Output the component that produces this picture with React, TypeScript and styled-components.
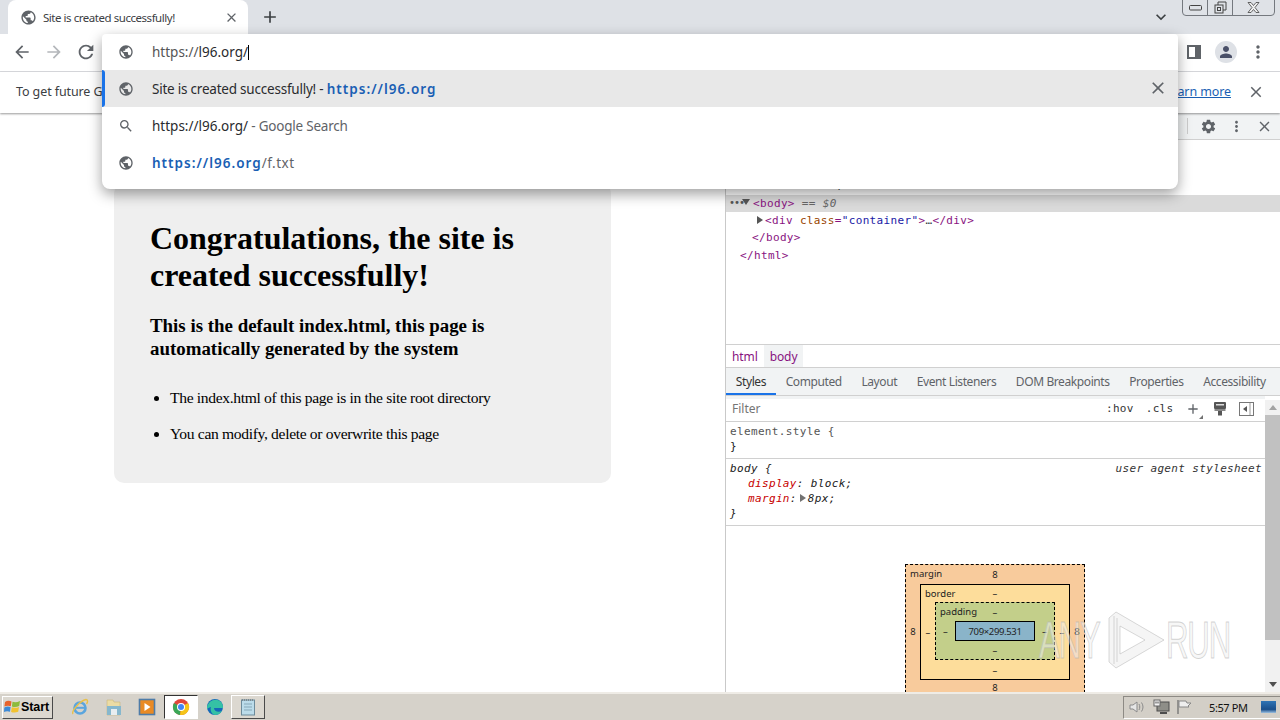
import React from 'react';
import styled, { createGlobalStyle } from 'styled-components';
import {
  MdAdd,
  MdArrowBack,
  MdArrowForward,
  MdClose,
  MdExpandMore,
  MdMoreVert,
  MdPerson,
  MdPublic,
  MdRefresh,
  MdSearch,
  MdSettings,
} from 'react-icons/md';

const UI_FONT = `'Noto Sans', 'Open Sans', sans-serif`;
const MONO_FONT = `'DejaVu Sans Mono', 'Liberation Mono', monospace`;

const GlobalStyle = createGlobalStyle`
  html, body {
    margin: 0;
    padding: 0;
    width: 1280px;
    height: 720px;
    overflow: hidden;
    background: #fff;
  }
  * { box-sizing: border-box; }
`;

const Screen = styled.div`
  position: relative;
  width: 1280px;
  height: 720px;
  display: flex;
  flex-direction: column;
  overflow: hidden;
  font-family: ${UI_FONT};
`;

/* ---------- tab strip ---------- */

const TabStrip = styled.div`
  height: 34px;
  flex: none;
  background: #dee1e6;
  display: flex;
  align-items: flex-end;
  padding: 0 5px 0 8px;
`;

const Tab = styled.div`
  width: 240px;
  height: 34px;
  background: #fff;
  border-radius: 8px 8px 0 0;
  display: flex;
  align-items: center;
  padding: 0 9px 0 12px;
  color: #5f6368;
`;

const TabTitle = styled.span`
  flex: 1;
  margin-left: 6px;
  font-size: 11.5px;
  letter-spacing: -0.46px;
  color: #3c4043;
  white-space: nowrap;
`;

const NewTab = styled.div`
  width: 28px;
  height: 28px;
  margin: 0 auto 3px 8px;
  display: flex;
  align-items: center;
  justify-content: center;
  color: #3c4043;
`;

const StripRight = styled.div`
  align-self: stretch;
  display: flex;
  align-items: flex-start;
  gap: 11px;
`;

const TabListButton = styled.div`
  margin-top: 7px;
  color: #3c4043;
  display: flex;
`;

const WindowControls = styled.div`
  display: flex;
  height: 17px;
  margin-top: -1px;
  border: 1px solid #74787e;
  border-radius: 0 0 4px 4px;
  background: #dfe2e7;
`;

const WindowButton = styled.div<{ $w: number }>`
  width: ${(p) => p.$w}px;
  display: flex;
  align-items: center;
  justify-content: center;
  & + & { border-left: 1px solid #74787e; }
`;

/* ---------- toolbar ---------- */

const Toolbar = styled.div`
  height: 38px;
  flex: none;
  background: #fff;
  border-bottom: 1px solid #dadce0;
  display: flex;
  align-items: center;
  justify-content: space-between;
  padding: 0 11px 1px 11px;
`;

const NavGroup = styled.div`
  display: flex;
  gap: 10px;
  align-items: center;
`;

const ToolButton = styled.div<{ $off?: boolean }>`
  width: 22px;
  height: 22px;
  display: flex;
  align-items: center;
  justify-content: center;
  color: ${(p) => (p.$off ? '#b4b7bb' : '#5f6368')};
`;

const SideIcon = styled.div`
  width: 14px;
  height: 14px;
  margin-right: 1px;
  border: 2px solid #5f6368;
  border-right-width: 6px;
  background: #fff;
`;

const Avatar = styled.div`
  width: 22px;
  height: 22px;
  border-radius: 50%;
  background: #dee1e6;
  color: #4a5068;
  display: flex;
  align-items: center;
  justify-content: center;
`;

/* ---------- info bar ---------- */

const InfoBar = styled.div`
  position: relative;
  z-index: 1;
  height: 41px;
  flex: none;
  background: #fff;
  box-shadow: 0 1px 2px rgba(0, 0, 0, 0.4);
  display: flex;
  align-items: center;
  justify-content: space-between;
  padding: 0 15px 2px 16px;
  font-size: 12.5px;
  letter-spacing: -0.1px;
  color: #3c4043;
`;

const InfoRight = styled.div`
  display: flex;
  align-items: center;
  gap: 16px;
  color: #5f6368;
`;

const LearnMore = styled.a`
  color: #1a5fb4;
  text-decoration: underline;
  font-size: 12.5px;
`;

/* ---------- page + devtools ---------- */

const Main = styled.div`
  flex: 1;
  min-height: 0;
  display: flex;
`;

const PageArea = styled.div`
  width: 725px;
  flex: none;
  padding: 70px 0 0 114px;
  background: #fff;
  font-family: 'Liberation Serif', 'Times New Roman', serif;
  color: #000;
`;

const Card = styled.div`
  width: 497px;
  height: 300px;
  background: #efefef;
  border-radius: 10px;
  padding: 37px 36px 0;
`;

const Heading = styled.h1`
  margin: 0 0 20px;
  font-size: 32px;
  line-height: 37px;
  font-weight: bold;
  letter-spacing: -0.02px;
`;

const SubHeading = styled.h2`
  margin: 0 0 29px;
  font-size: 18.9px;
  line-height: 23px;
  font-weight: bold;
`;

const List = styled.ul`
  margin: 0;
  padding: 0 0 0 20px;
`;

const Item = styled.li`
  font-size: 15.6px;
  letter-spacing: -0.34px;
  line-height: 18px;
  margin-bottom: 18px;
`;

const DevTools = styled.div`
  flex: 1;
  min-width: 0;
  border-left: 1px solid #c9c9c9;
  display: flex;
  flex-direction: column;
  background: #fff;
  color: #303942;
  overflow: hidden;
`;

const DevToolbar = styled.div`
  height: 27px;
  flex: none;
  background: #f1f3f4;
  border-bottom: 1px solid #d0d0d0;
  display: flex;
  align-items: center;
  justify-content: flex-end;
  gap: 6px;
  padding-right: 5px;
  color: #5f6368;
`;

const ToolDivider = styled.div`
  width: 1px;
  height: 16px;
  background: #ccc;
  margin-right: 3px;
`;

const Tree = styled.div`
  height: 204px;
  flex: none;
  padding-top: 37px;
  font-family: ${MONO_FONT};
  font-size: 11px;
  letter-spacing: 0.35px;
`;

const TreeRow = styled.div<{ $indent: number; $selected?: boolean; $h?: number }>`
  position: relative;
  height: ${(p) => p.$h ?? 17.6}px;
  line-height: ${(p) => p.$h ?? 17.6}px;
  padding-left: ${(p) => p.$indent}px;
  background: ${(p) => (p.$selected ? '#dadada' : 'transparent')};
  white-space: nowrap;
`;

const Tag = styled.span`
  color: #881280;
`;

const AttrName = styled.span`
  color: #994500;
`;

const AttrValue = styled.span`
  color: #1a1aa6;
`;

const Faint = styled.span`
  color: #666;
  font-style: italic;
`;

const Dots = styled.span`
  position: absolute;
  left: 3px;
  top: -1px;
  color: #555;
  font-size: 10px;
  letter-spacing: -1px;
`;

const Arrow = styled.span<{ $open?: boolean; $x: number }>`
  position: absolute;
  left: ${(p) => p.$x}px;
  top: 4px;
  width: 0;
  height: 0;
  ${(p) =>
    p.$open
      ? `border-left: 4px solid transparent; border-right: 4px solid transparent; border-top: 6px solid #555;`
      : `border-top: 4px solid transparent; border-bottom: 4px solid transparent; border-left: 6px solid #555;`}
`;

const Breadcrumbs = styled.div`
  height: 24px;
  flex: none;
  display: flex;
  align-items: stretch;
  border-top: 1px solid #d0d0d0;
  border-bottom: 1px solid #d0d0d0;
  font-size: 12px;
  letter-spacing: -0.1px;
  color: #881280;
`;

const Crumb = styled.div<{ $active?: boolean }>`
  padding: 0 6px;
  display: flex;
  align-items: center;
  background: ${(p) => (p.$active ? '#f1f3f4' : 'transparent')};
`;

const TabsBar = styled.div`
  height: 28px;
  flex: none;
  display: flex;
  background: #f1f3f4;
  border-bottom: 1px solid #d0d0d0;
  font-size: 12px;
  letter-spacing: -0.4px;
  color: #5f6368;
`;

const PaneTab = styled.div<{ $active?: boolean }>`
  padding: 0 9.8px;
  display: flex;
  align-items: center;
  white-space: nowrap;
  color: ${(p) => (p.$active ? '#333' : '#5f6368')};
  box-shadow: ${(p) => (p.$active ? 'inset 0 -2px 0 #1a73e8' : 'none')};
`;

const StylesBody = styled.div`
  flex: 1;
  min-height: 0;
  display: flex;
`;

const StylesPane = styled.div`
  flex: 1;
  min-width: 0;
  overflow: hidden;
`;

const FilterRow = styled.div`
  height: 26px;
  display: flex;
  align-items: center;
  background: #fff;
  border-bottom: 1px solid #d0d0d0;
  box-shadow: inset 0 3px 0 #f1f3f4;
`;

const FilterInput = styled.div`
  width: 371px;
  padding-left: 6px;
  font-size: 12px;
  color: #757575;
`;

const FilterTools = styled.div`
  flex: 1;
  display: flex;
  align-items: center;
  gap: 12px;
  padding-left: 9px;
  font-family: ${MONO_FONT};
  font-size: 11px;
  letter-spacing: 0.3px;
  color: #333;
`;

const AddStyle = styled.span`
  position: relative;
  display: flex;
  color: #5f6368;
  &::after {
    content: '';
    position: absolute;
    right: -2px;
    bottom: -2px;
    border-left: 4px solid transparent;
    border-bottom: 4px solid #727272;
  }
`;

const StyleRule = styled.div<{ $italic?: boolean }>`
  position: relative;
  padding: 3px 0 4px 4px;
  border-bottom: 1px solid #d0d0d0;
  font-family: ${MONO_FONT};
  font-size: 11px;
  letter-spacing: 0.35px;
  line-height: 14.7px;
  color: #222;
  font-style: ${(p) => (p.$italic ? 'italic' : 'normal')};
`;

const Selector = styled.div<{ $muted?: boolean }>`
  color: ${(p) => (p.$muted ? '#555' : '#222')};
`;

const Source = styled.span`
  position: absolute;
  right: 3px;
  top: 3px;
  color: #333;
`;

const Decl = styled.div`
  padding-left: 18px;
`;

const PropName = styled.span`
  color: #c80000;
`;

const SmallArrow = styled.span`
  display: inline-block;
  width: 0;
  height: 0;
  margin: 0 2px 0 3px;
  border-top: 4px solid transparent;
  border-bottom: 4px solid transparent;
  border-left: 6px solid #727272;
`;

/* ---------- box model ---------- */

const BoxWrap = styled.div`
  padding: 38px 1px 0 0;
  display: flex;
  justify-content: center;
`;

const MetricBox = styled.div<{ $w: number; $h: number; $side: number; $top: number; $bg: string; $dashed?: boolean }>`
  position: relative;
  width: ${(p) => p.$w}px;
  height: ${(p) => p.$h}px;
  background: ${(p) => p.$bg};
  border: 1px ${(p) => (p.$dashed ? 'dashed' : 'solid')} #000;
  display: grid;
  grid-template-columns: ${(p) => p.$side}px 1fr ${(p) => p.$side}px;
  grid-template-rows: ${(p) => p.$top}px minmax(0, 1fr) ${(p) => p.$top}px;
  font-size: 9.5px;
  color: #222;
`;

const Metric = styled.div<{ $col: number; $row: number }>`
  grid-column: ${(p) => p.$col};
  grid-row: ${(p) => p.$row};
  display: flex;
  align-items: center;
  justify-content: center;
`;

const BoxLabel = styled.span`
  position: absolute;
  left: 4px;
  top: 2px;
  line-height: 14px;
`;

const BoxCenter = styled.div`
  grid-column: 2;
  grid-row: 2;
`;

const ContentBox = styled.div`
  width: 80px;
  height: 20px;
  background: #8ab4c9;
  border: 1px solid #000;
  display: flex;
  align-items: center;
  justify-content: center;
  font-size: 9.5px;
  letter-spacing: -0.35px;
  color: #222;
`;

const Scrollbar = styled.div`
  width: 15px;
  flex: none;
  margin-top: 4px;
  background: #f1f1f1;
  display: flex;
  flex-direction: column;
  align-items: center;
`;

const ScrollEnd = styled.div<{ $down?: boolean }>`
  height: 15px;
  flex: none;
  display: flex;
  align-items: center;
  justify-content: center;
  &::before {
    content: '';
    border-left: 4px solid transparent;
    border-right: 4px solid transparent;
    ${(p) => (p.$down ? 'border-top: 5px solid #505050;' : 'border-bottom: 5px solid #a3a3a3;')}
  }
`;

const ScrollThumb = styled.div`
  width: 100%;
  height: 225px;
  flex: none;
  background: #c1c1c1;
`;

const ScrollTrack = styled.div`
  flex: 1;
`;

const Watermark = styled.div`
  position: absolute;
  left: 1039px;
  top: 610px;
  height: 60px;
  display: flex;
  align-items: center;
  pointer-events: none;
  font-family: 'Liberation Sans', sans-serif;
  font-size: 52px;
  color: rgba(240, 240, 240, 0.5);
  -webkit-text-stroke: 1px rgba(175, 175, 175, 0.55);
`;

const WatermarkText = styled.span<{ $w: number }>`
  display: inline-block;
  width: ${(p) => p.$w}px;
  line-height: 60px;
  letter-spacing: -2px;
  transform: scaleX(0.6);
  transform-origin: left center;
`;

/* ---------- taskbar ---------- */

const Taskbar = styled.div`
  height: 28px;
  flex: none;
  background: #d6d2ca;
  border-top: 2px solid #efece6;
  display: flex;
  align-items: center;
  padding-left: 2px;
`;

const StartButton = styled.div`
  width: 51px;
  height: 23px;
  background: #dcd8d0;
  border: 1px solid;
  border-color: #fff #4a4a4a #4a4a4a #fff;
  display: flex;
  align-items: center;
  padding-left: 1px;
  font-family: 'Liberation Sans', sans-serif;
  font-weight: bold;
  font-size: 12.5px;
  letter-spacing: -0.1px;
  color: #000;
`;

const TaskIcons = styled.div`
  display: flex;
  align-items: center;
  margin-left: 10px;
`;

const TaskItem = styled.div<{ $pressed?: boolean; $raised?: boolean }>`
  width: 33.7px;
  height: 24px;
  display: flex;
  align-items: center;
  justify-content: center;
  ${(p) => p.$pressed && 'background: #fff; border: 1px solid; border-color: #333 #fff #fff #333;'}
  ${(p) => p.$raised && 'background: #dcd8d0; border: 1px solid; border-color: #fff #4a4a4a #4a4a4a #fff;'}
`;

const Tray = styled.div`
  margin-left: auto;
  width: 157px;
  height: 23px;
  display: flex;
  align-items: center;
  padding-left: 4px;
  border-left: 1px solid #8d8a84;
  border-top: 1px solid #8d8a84;
  border-bottom: 1px solid #fff;
  background: #d3cfc7;
`;

const TrayIcons = styled.div`
  display: flex;
  gap: 6px;
  align-items: center;
`;

const Clock = styled.div`
  margin-left: 16px;
  font-size: 11px;
  letter-spacing: -0.4px;
  color: #111;
  white-space: nowrap;
`;

const DesktopButton = styled.div`
  margin-left: 13px;
  width: 15px;
  height: 12px;
  background: linear-gradient(180deg, #2f74b5, #1a4f8b 70%, #9cc0e0);
`;

/* ---------- omnibox dropdown ---------- */

const Omnibox = styled.div`
  position: absolute;
  left: 102px;
  top: 34px;
  width: 1076px;
  height: 155px;
  background: #fff;
  border-radius: 4px 4px 8px 8px;
  box-shadow: 0 5px 14px rgba(0, 0, 0, 0.38);
  z-index: 5;
  font-size: 13.5px;
  letter-spacing: -0.22px;
  color: #2a2b2e;
`;

const OmniRow = styled.div<{ $selected?: boolean; $h?: number }>`
  position: relative;
  height: ${(p) => p.$h ?? 37}px;
  display: flex;
  align-items: center;
  padding-left: 15px;
  background: ${(p) => (p.$selected ? '#e8e8e8' : 'transparent')};
  white-space: nowrap;
`;

const OmniIcon = styled.span`
  width: 18px;
  display: flex;
  justify-content: center;
  margin-right: 17px;
  color: #5f6368;
`;

const SelectBar = styled.span`
  position: absolute;
  left: 0;
  top: 0;
  bottom: 0;
  width: 3px;
  border-radius: 0 3px 3px 0;
  background: #1a73e8;
`;

const OmniClose = styled.span`
  position: absolute;
  right: 10px;
  top: 8px;
  display: flex;
  color: #5f6368;
`;

const UrlMatch = styled.b`
  color: #1a5fb4;
  font-weight: 600;
  letter-spacing: 1px;
`;

const Muted = styled.span<{ $wide?: boolean }>`
  color: #5f6368;
  letter-spacing: ${(p) => (p.$wide ? '0.5px' : 'inherit')};
`;

const Caret = styled.span`
  width: 1px;
  height: 15px;
  background: #000;
`;

const UrlText = styled.span`
  letter-spacing: 0;
`;

const UrlScheme = styled.span`
  color: #555;
`;

/* ---------- drawings ---------- */

const WindowsFlag = () => (
  <svg width="17" height="16" viewBox="0 0 17 16">
    <path d="M1 3 Q4 1 7.5 2.5 L6.8 7.2 Q3.5 6 .4 7.6z" fill="#e8642c" />
    <path d="M8.5 2.8 Q12 4 16 2 L15.2 7 Q11.5 8.6 7.9 7.4z" fill="#8dbb3c" />
    <path d="M.3 8.4 Q3.5 7 6.6 8.1 L6 12.8 Q3 11.6 0 13z" fill="#3d8ad6" />
    <path d="M7.8 8.3 Q11.5 9.4 15 7.9 L14.2 12.8 Q10.5 14.2 7.1 13z" fill="#f2c230" />
  </svg>
);

const IeIcon = () => (
  <svg width="18" height="18" viewBox="0 0 18 18">
    <circle cx="9" cy="10" r="5.500" fill="none" stroke="#5aa5de" strokeWidth="2.600" />
    <path d="M4 9.800h10" stroke="#5aa5de" strokeWidth="2" />
    <path d="M2 16C0 13 9 3 15 1.500c2.500 .5 1.500 3 .5 4.500" fill="none" stroke="#e8c04a" strokeWidth="1.400" />
  </svg>
);

const FolderIcon = () => (
  <svg width="18" height="18" viewBox="0 0 18 18">
    <path d="M2 2h6l1 2h6v13H2z" fill="#ecdca4" stroke="#c9b678" strokeWidth=".6" />
    <path d="M2 8h14v9H2z" fill="#86b7cd" />
    <path d="M6 11h6v6H6z" fill="#e8edf0" />
  </svg>
);

const MediaIcon = () => (
  <svg width="18" height="18" viewBox="0 0 18 18">
    <rect x="1.500" y="1.500" width="15" height="15" fill="#e98a24" stroke="#4e7ca8" strokeWidth="1.600" />
    <path d="M6.500 5l6 4-6 4z" fill="#fff" />
  </svg>
);

const ChromeIcon = () => (
  <svg width="18" height="18" viewBox="0 0 18 18">
    <circle cx="9" cy="9" r="8" fill="#e0463a" />
    <path d="M9 9L2 5A8 8 0 0 0 8 17z" fill="#3aa757" />
    <path d="M9 9l7-4a8 8 0 0 1-8 12z" fill="#f5c518" />
    <circle cx="9" cy="9" r="4" fill="#fff" />
    <circle cx="9" cy="9" r="3" fill="#4285f4" />
  </svg>
);

const EdgeIcon = () => (
  <svg width="18" height="18" viewBox="0 0 18 18">
    <circle cx="9" cy="9" r="8" fill="#1468b8" />
    <path d="M1 9C2 3 10-1 15 4c2 2 2 5 2 6H8c0 3 4 5 8 3-2 3-5 4-7 4 -4-1-5-5-4-8-1 0-3 1-4 2z" fill="#35c1a5" />
  </svg>
);

const NotepadIcon = () => (
  <svg width="16" height="18" viewBox="0 0 16 18">
    <rect x="1.500" y="2" width="13" height="15" fill="#bcdcea" stroke="#6d8b9b" />
    <path d="M2 2h12" stroke="#7d8a91" strokeWidth="2" strokeDasharray="1 1" />
    <path d="M4 6h8M4 9h8M4 12h8" stroke="#86a8b8" />
  </svg>
);

const SpeakerIcon = () => (
  <svg width="19" height="16" viewBox="0 0 19 16">
    <path d="M2 6h3l4-3v10l-4-3H2z" fill="#e6e6e6" stroke="#8b8b8b" />
    <path d="M11 5c1 2 1 4 0 6M13.500 3.500c2 3 2 6 0 9" fill="none" stroke="#8b8b8b" />
  </svg>
);

const NetworkIcon = () => (
  <svg width="17" height="16" viewBox="0 0 17 16">
    <rect x="4" y="3" width="12" height="9" fill="#8e8e88" stroke="#4d4d4d" />
    <path d="M7 14h7" stroke="#4d4d4d" strokeWidth="2" />
    <rect x="1" y="1" width="6" height="6" fill="#f2f2f2" stroke="#666" />
    <path d="M3 2.500v2M5 2.500v2" stroke="#444" />
  </svg>
);

const FlagIcon = () => (
  <svg width="17" height="16" viewBox="0 0 17 16">
    <path d="M2 1v14" stroke="#777" strokeWidth="1.400" />
    <path d="M3 2h7l1 2h4l-3 3 1 1H3z" fill="#eee" stroke="#888" />
  </svg>
);

const RestoreGlyph = () => (
  <svg width="13" height="13" viewBox="0 0 13 13" fill="none" stroke="#444">
    <rect x="1" y="4" width="8" height="8" />
    <path d="M4 4V1h8v8H9" />
    <rect x="3.500" y="6.500" width="3" height="3" />
  </svg>
);

const MinGlyph = () => (
  <svg width="13" height="6" viewBox="0 0 13 6" fill="none" stroke="#444">
    <rect x=".5" y=".5" width="12" height="4.500" rx="1" />
  </svg>
);

const CloseGlyph = () => (
  <svg width="13" height="11" viewBox="0 0 13 11" fill="#f0f0f0" stroke="#444" strokeWidth=".8">
    <path d="M1 .5h3l2.500 3 2.500-3h3L8 5.500l4 5H9L6.500 7.500 4 10.500H1l4-5z" />
  </svg>
);

const PaintGlyph = () => (
  <svg width="14" height="15" viewBox="0 0 14 15">
    <rect x="1" y="1" width="12" height="7" rx="1" fill="#555" />
    <rect x="3" y="3" width="8" height="1.500" fill="#ddd" />
    <rect x="1.500" y="8" width="11" height="2" fill="#888" />
    <rect x="5" y="10" width="4" height="4.500" fill="#555" />
  </svg>
);

const PanelGlyph = () => (
  <svg width="15" height="14" viewBox="0 0 15 14">
    <rect x=".5" y=".5" width="14" height="13" fill="#fff" stroke="#777" />
    <path d="M11 1v12" stroke="#999" />
    <path d="M8 4v6L4 7z" fill="#555" />
  </svg>
);

const TriangleGlyph = () => (
  <svg width="59" height="60" viewBox="0 0 59 60" fill="rgba(225,225,225,.35)" stroke="rgba(170,170,170,.45)">
    <path d="M2 8 L9 2 L57 30 L9 58 L2 52z" />
    <path d="M13 16 L38 30 L13 44z" fill="#fff" />
    <path d="M7 6v48M10 8v44" />
  </svg>
);

const App = () => (
  <Screen>
    <GlobalStyle />

    <TabStrip>
      <Tab>
        <MdPublic size={17} />
        <TabTitle>Site is created successfully!</TabTitle>
        <MdClose size={15} />
      </Tab>
      <NewTab>
        <MdAdd size={20} />
      </NewTab>
      <StripRight>
        <TabListButton>
          <MdExpandMore size={20} />
        </TabListButton>
        <WindowControls>
          <WindowButton $w={24}>
            <MinGlyph />
          </WindowButton>
          <WindowButton $w={25}>
            <RestoreGlyph />
          </WindowButton>
          <WindowButton $w={42}>
            <CloseGlyph />
          </WindowButton>
        </WindowControls>
      </StripRight>
    </TabStrip>

    <Toolbar>
      <NavGroup>
        <ToolButton>
          <MdArrowBack size={20} />
        </ToolButton>
        <ToolButton $off>
          <MdArrowForward size={20} />
        </ToolButton>
        <ToolButton>
          <MdRefresh size={22} />
        </ToolButton>
      </NavGroup>
      <NavGroup>
        <ToolButton>
          <SideIcon />
        </ToolButton>
        <Avatar>
          <MdPerson size={18} />
        </Avatar>
        <ToolButton>
          <MdMoreVert size={20} />
        </ToolButton>
      </NavGroup>
    </Toolbar>

    <InfoBar>
      <span>To get future Google Chrome updates, you'll need Windows 10 or later.</span>
      <InfoRight>
        <LearnMore>Learn more</LearnMore>
        <MdClose size={18} />
      </InfoRight>
    </InfoBar>

    <Main>
      <PageArea>
        <Card>
          <Heading>Congratulations, the site is created successfully!</Heading>
          <SubHeading>This is the default index.html, this page is automatically generated by the system</SubHeading>
          <List>
            <Item>The index.html of this page is in the site root directory</Item>
            <Item>You can modify, delete or overwrite this page</Item>
          </List>
        </Card>
      </PageArea>

      <DevTools>
        <DevToolbar>
          <ToolDivider />
          <ToolButton>
            <MdSettings size={17} />
          </ToolButton>
          <ToolButton>
            <MdMoreVert size={17} />
          </ToolButton>
          <ToolButton>
            <MdClose size={17} />
          </ToolButton>
        </DevToolbar>

        <Tree>
          <TreeRow $indent={28}>
            <Tag>&lt;title&gt;</Tag>Site&lt;/title&gt;
          </TreeRow>
          <TreeRow $indent={27} $selected $h={17}>
            <Dots>•••</Dots>
            <Arrow $open $x={16} />
            <Tag>&lt;body&gt;</Tag> <Faint>== $0</Faint>
          </TreeRow>
          <TreeRow $indent={39}>
            <Arrow $x={31} />
            <Tag>&lt;div</Tag> <AttrName>class</AttrName>
            <Tag>=</Tag>
            <AttrValue>"container"</AttrValue>
            <Tag>&gt;</Tag>…<Tag>&lt;/div&gt;</Tag>
          </TreeRow>
          <TreeRow $indent={26}>
            <Tag>&lt;/body&gt;</Tag>
          </TreeRow>
          <TreeRow $indent={14}>
            <Tag>&lt;/html&gt;</Tag>
          </TreeRow>
        </Tree>

        <Breadcrumbs>
          <Crumb>html</Crumb>
          <Crumb $active>body</Crumb>
        </Breadcrumbs>

        <TabsBar>
          <PaneTab $active>Styles</PaneTab>
          <PaneTab>Computed</PaneTab>
          <PaneTab>Layout</PaneTab>
          <PaneTab>Event Listeners</PaneTab>
          <PaneTab>DOM Breakpoints</PaneTab>
          <PaneTab>Properties</PaneTab>
          <PaneTab>Accessibility</PaneTab>
        </TabsBar>

        <StylesBody>
          <StylesPane>
            <FilterRow>
              <FilterInput>Filter</FilterInput>
              <FilterTools>
                <span>:hov</span>
                <span>.cls</span>
                <AddStyle>
                  <MdAdd size={16} />
                </AddStyle>
                <PaintGlyph />
                <PanelGlyph />
              </FilterTools>
            </FilterRow>

            <StyleRule>
              <Selector $muted>element.style {'{'}</Selector>
              <div>{'}'}</div>
            </StyleRule>

            <StyleRule $italic>
              <Selector>body {'{'}</Selector>
              <Source>user agent stylesheet</Source>
              <Decl>
                <PropName>display</PropName>: block;
              </Decl>
              <Decl>
                <PropName>margin</PropName>:<SmallArrow />8px;
              </Decl>
              <div>{'}'}</div>
            </StyleRule>

            <BoxWrap>
              <MetricBox $w={180} $h={134} $side={14} $top={19} $bg="#f8cb9c" $dashed>
                <BoxLabel>margin</BoxLabel>
                <Metric $col={2} $row={1}>8</Metric>
                <Metric $col={1} $row={2}>8</Metric>
                <BoxCenter>
                  <MetricBox $w={150} $h={96} $side={14} $top={17} $bg="#fddd9b">
                    <BoxLabel>border</BoxLabel>
                    <Metric $col={2} $row={1}>–</Metric>
                    <Metric $col={1} $row={2}>–</Metric>
                    <BoxCenter>
                      <MetricBox $w={120} $h={58} $side={19} $top={18} $bg="#c3cf8a" $dashed>
                        <BoxLabel>padding</BoxLabel>
                        <Metric $col={2} $row={1}>–</Metric>
                        <Metric $col={1} $row={2}>–</Metric>
                        <BoxCenter>
                          <ContentBox>709×299.531</ContentBox>
                        </BoxCenter>
                        <Metric $col={3} $row={2}>–</Metric>
                        <Metric $col={2} $row={3}>–</Metric>
                      </MetricBox>
                    </BoxCenter>
                    <Metric $col={3} $row={2}>–</Metric>
                    <Metric $col={2} $row={3}>–</Metric>
                  </MetricBox>
                </BoxCenter>
                <Metric $col={3} $row={2}>8</Metric>
                <Metric $col={2} $row={3}>8</Metric>
              </MetricBox>
            </BoxWrap>
          </StylesPane>

          <Scrollbar>
            <ScrollEnd />
            <ScrollThumb />
            <ScrollTrack />
            <ScrollEnd $down />
          </Scrollbar>
        </StylesBody>
      </DevTools>
    </Main>

    <Taskbar>
      <StartButton>
        <WindowsFlag />
        Start
      </StartButton>
      <TaskIcons>
        <TaskItem>
          <IeIcon />
        </TaskItem>
        <TaskItem>
          <FolderIcon />
        </TaskItem>
        <TaskItem>
          <MediaIcon />
        </TaskItem>
        <TaskItem $pressed>
          <ChromeIcon />
        </TaskItem>
        <TaskItem>
          <EdgeIcon />
        </TaskItem>
        <TaskItem $raised>
          <NotepadIcon />
        </TaskItem>
      </TaskIcons>
      <Tray>
        <TrayIcons>
          <SpeakerIcon />
          <NetworkIcon />
          <FlagIcon />
        </TrayIcons>
        <Clock>5:57 PM</Clock>
        <DesktopButton />
      </Tray>
    </Taskbar>

    <Omnibox>
      <OmniRow $h={36}>
        <OmniIcon>
          <MdPublic size={16} />
        </OmniIcon>
        <UrlText>
          <UrlScheme>https://</UrlScheme>l96.org/
        </UrlText>
        <Caret />
      </OmniRow>
      <OmniRow $selected>
        <SelectBar />
        <OmniIcon>
          <MdPublic size={16} />
        </OmniIcon>
        Site is created successfully!&nbsp;-&nbsp;
        <UrlMatch>https://l96.org</UrlMatch>
        <OmniClose>
          <MdClose size={20} />
        </OmniClose>
      </OmniRow>
      <OmniRow>
        <OmniIcon>
          <MdSearch size={16} />
        </OmniIcon>
        <UrlText>https://l96.org/</UrlText>&nbsp;
        <Muted>- Google Search</Muted>
      </OmniRow>
      <OmniRow>
        <OmniIcon>
          <MdPublic size={16} />
        </OmniIcon>
        <UrlMatch>https://l96.org</UrlMatch>
        <Muted $wide>/f.txt</Muted>
      </OmniRow>
    </Omnibox>

    <Watermark>
      <WatermarkText $w={68}>ANY</WatermarkText>
      <TriangleGlyph />
      <WatermarkText $w={64}>RUN</WatermarkText>
    </Watermark>
  </Screen>
);

export default App;
